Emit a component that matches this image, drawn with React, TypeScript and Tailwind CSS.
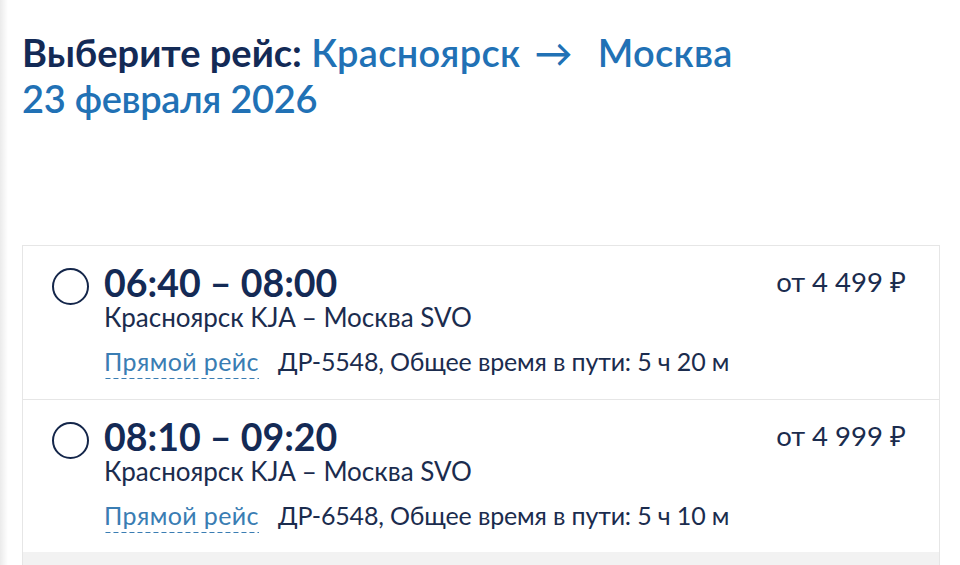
const flights = [
  {
    time: "06:40 – 08:00",
    route: "Красноярск KJA – Москва SVO",
    code: "ДР-5548",
    duration: "5 ч 20 м",
    price: "4 499",
  },
  {
    time: "08:10 – 09:20",
    route: "Красноярск KJA – Москва SVO",
    code: "ДР-6548",
    duration: "5 ч 10 м",
    price: "4 999",
  },
];

function FlightRow({ f, last }: { f: (typeof flights)[number]; last?: boolean }) {
  return (
    <div
      className={`flex items-start pl-[29px] pr-[33px] pt-[18px] ${
        last ? "h-[152px]" : "h-[154px] border-b border-[#e6e6e6]"
      }`}
    >
      <div className="mt-[4px] w-[37px] h-[37px] rounded-full border-2 border-[#14264a] shrink-0" />
      <div className="ml-[15px] flex-1">
        <div className="text-[37.5px] leading-[38px] font-bold text-[#142a55]">{f.time}</div>
        <div className="text-[26px] leading-[30px] text-[#1b2c4e]">{f.route}</div>
        <div className="mt-[14px] text-[25px] leading-[30px]">
          <span className="text-[#3a7db3] tracking-[0.4px] pb-[3px] bg-[linear-gradient(to_right,#3a7db3_62%,transparent_0)] bg-[length:8px_1.5px] bg-repeat-x bg-bottom">
            Прямой рейс
          </span>
          <span className="ml-[19px] text-[#1b2c4e] tracking-[-0.15px]">
            {f.code}, Общее время в пути: {f.duration}
          </span>
        </div>
      </div>
      <div className="mt-[2px] text-[27.5px] leading-[32px] text-[#1b2c4e]">от {f.price} ₽</div>
    </div>
  );
}

export default function App() {
  return (
    <div
      className="w-[960px] h-[565px] overflow-hidden bg-white flex"
      style={{ fontFamily: "Lato, 'Noto Sans', sans-serif" }}
    >
      <div className="w-[8px] bg-gradient-to-r from-[#ebebeb] to-white shrink-0" />
      <div className="flex-1 pl-[14px] pr-[20px]">
        <h1 className="pt-[29px] text-[38px] leading-[46px] font-bold text-[#132a56]">
          <div>
            Выберите рейс:{" "}
            <span className="font-semibold text-[#2171b5] tracking-[0.3px]">
              Красноярск<span className="ml-[14px] mr-[25px]">→</span>Москва
            </span>
          </div>
          <div className="font-semibold text-[#2171b5] tracking-[-0.3px]">23 февраля 2026</div>
        </h1>
        <div className="mt-[124px] border border-[#e6e6e6]">
          {flights.map((f, i) => (
            <FlightRow key={f.code} f={f} last={i === flights.length - 1} />
          ))}
          <div className="h-[40px] bg-[#f2f2f2]" />
        </div>
      </div>
    </div>
  );
}
